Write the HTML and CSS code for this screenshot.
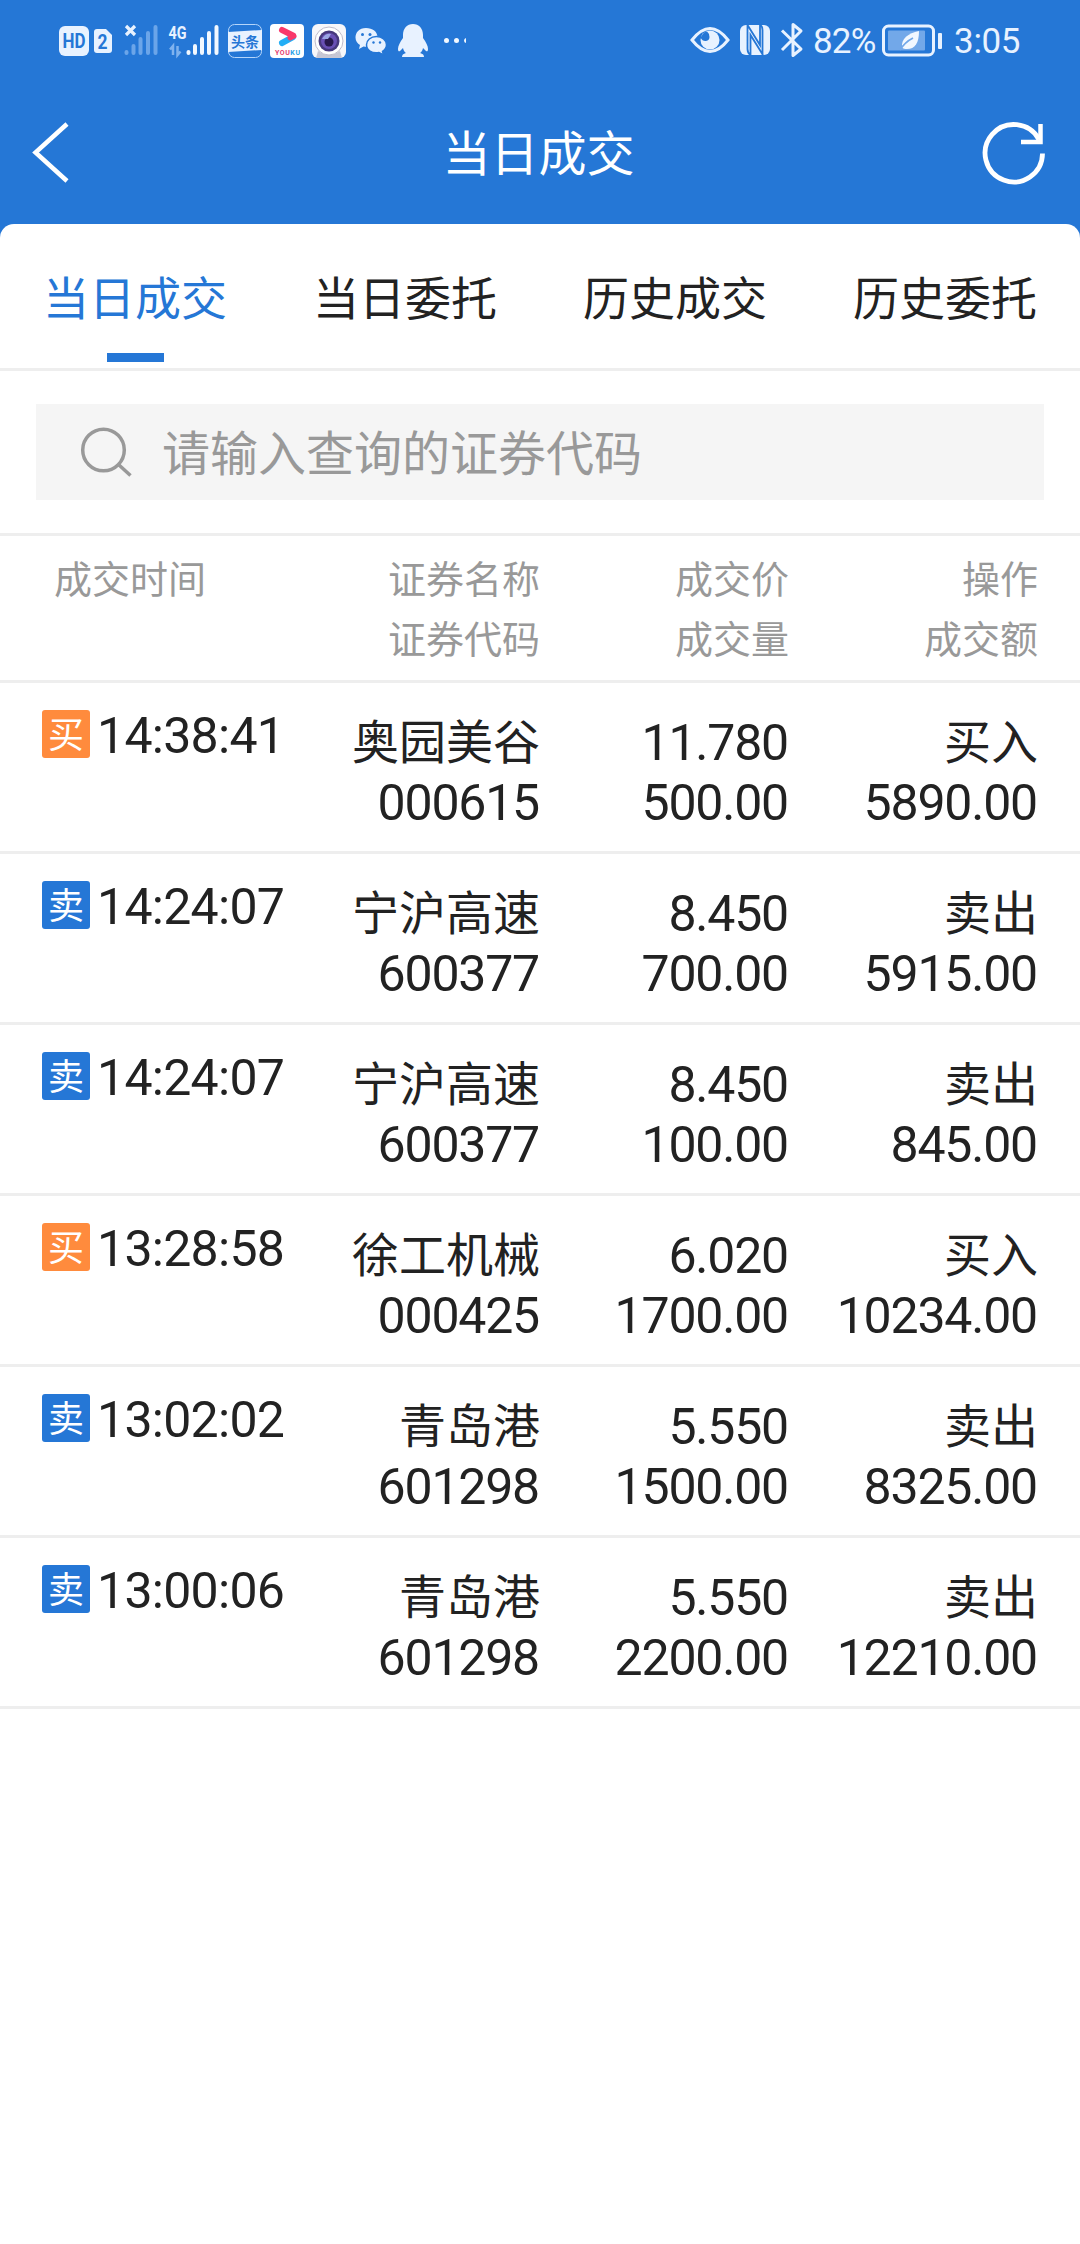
FILE: index.html
```html
<!DOCTYPE html>
<html lang="zh-CN">
<head>
    <meta charset="UTF-8">
    <meta name="viewport" content="width=device-width, initial-scale=1.0">
    <title>当日成交</title>
    <link rel="stylesheet" href="styles.css">
</head>
<body>

<div class="status-bar">
    <div class="status-left">
        <!-- HD + sim 2 -->
        <svg width="53" height="40" viewBox="0 0 53 40">
            <rect x="0" y="6" width="30" height="30" rx="6" fill="#e8f2ff"/>
            <text x="15" y="28" class="icon-text" font-size="20" textLength="23" lengthAdjust="spacingAndGlyphs" text-anchor="middle">HD</text>
            <path d="M38 9h9l6 6v15a3 3 0 0 1-3 3H38a3 3 0 0 1-3-3V12a3 3 0 0 1 3-3z" fill="#e8f2ff"/>
            <text x="43.5" y="28.5" class="icon-text" font-size="21" textLength="10" lengthAdjust="spacingAndGlyphs" text-anchor="middle">2</text>
        </svg>
        <!-- sim 1, no signal -->
        <svg width="40" height="40" viewBox="0 0 40 40">
            <path d="M6 6l9 9M15 6l-9 9" stroke="#e8f2ff" stroke-width="3.2"/>
            <g stroke="#6ba5e9" stroke-width="4" stroke-linecap="round">
                <path d="M6.5 32v1M13.5 26v7M20.5 19v14M28 13v20M35.5 7v26"/>
            </g>
        </svg>
        <!-- sim 2, 4G -->
        <svg width="52" height="40" viewBox="0 0 52 40">
            <text x="0.5" y="18.5" class="icon-text light" font-size="19" textLength="18" lengthAdjust="spacingAndGlyphs">4G</text>
            <path d="M5 35V26l-3 3.5M9.5 26v9l3-3.500" fill="none" stroke="#7fb2ee" stroke-width="2.5"/>
            <g stroke="#f2f8ff" stroke-width="4" stroke-linecap="round">
                <path d="M20.5 32v1M27 26v7M34 19v14M41 13v20M48.5 7v26"/>
            </g>
        </svg>
        <!-- toutiao -->
        <svg width="34" height="40" viewBox="0 0 34 40">
            <rect x="0.5" y="4.500" width="33" height="33" rx="6" fill="#2577d6" stroke="#b5d5fa"/>
            <path d="M0 12l34-2v20L0 32z" fill="#e8f2ff"/>
            <text x="17" y="26.5" class="icon-text" font-size="14" text-anchor="middle">头条</text>
        </svg>
        <!-- youku -->
        <svg width="34" height="40" viewBox="0 0 34 40">
            <rect y="4" width="34" height="34" rx="4" fill="#fff"/>
            <path d="M12 23l11-6" stroke="#22aef5" stroke-width="6" stroke-linecap="round"/>
            <path d="M12 10l11 5.5" stroke="#f9386b" stroke-width="6" stroke-linecap="round"/>
            <path d="M20 18l4-2" stroke="#f9386b" stroke-width="5" stroke-linecap="round"/>
            <text x="5" y="35" font-size="7" font-weight="700" fill="#e54070" textLength="25" class="youku-text">YOU<tspan fill="#27a0e8">KU</tspan></text>
        </svg>
        <!-- camera -->
        <svg width="34" height="40" viewBox="0 0 34 40">
            <rect y="4" width="34" height="34" rx="6" fill="#f7f7fa"/>
            <path d="M6 31q11 7 22 0l2 7H4z" fill="#c6c6d4"/>
            <circle cx="17" cy="21" r="14" fill="#fff" stroke="#c0bcca"/>
            <circle cx="17" cy="21" r="10.5" fill="#47397c"/>
            <circle cx="17" cy="21" r="8" fill="#6950b4"/>
            <circle cx="17" cy="22" r="4.5" fill="#28194d"/>
            <path d="M10 19q3-6 9-5l-3 5z" fill="#9aa5e4"/>
        </svg>
        <!-- wechat -->
        <svg width="34" height="40" viewBox="0 0 34 40">
            <path d="M12 8C5 8 1.5 12.5 1.5 17.5c0 3.5 2 6 4.5 7.5l-1 4 4.500-2.500c8 2 14-3 14-9S18.500 8 12 8z" fill="#e8f2ff"/>
            <path d="M22.5 16.5c-6 0-10 4-10 8.300 0 5 5 9 12.500 7.700l4.500 2.300-1-3.500c2.500-1.500 4-3.800 4-6.500 0-4.500-4.500-8.300-10-8.300z" fill="#e8f2ff" stroke="#2577d6" stroke-width="1.5"/>
            <g fill="#2577d6"><circle cx="8.5" cy="14.5" r="1.5"/><circle cx="16" cy="14.5" r="1.5"/><circle cx="19.5" cy="22.5" r="1.2"/><circle cx="26" cy="22.5" r="1.2"/></g>
        </svg>
        <!-- qq -->
        <svg width="34" height="40" viewBox="0 0 34 40">
            <path d="M17 4c-6 0-10 4.500-10 11v3c-3 4-5 8-5 11 0 2.500 1 2.500 2 2l3-3c.5 2.500 1.500 4 3 5-3 .7-4 2-4 4h22c0-2-1-3.300-4-4 1.500-1 2.500-2.500 3-5l3 3c1 .5 2 .5 2-2 0-3-2-7-5-11v-3c0-6.500-4-11-10-11z" fill="#e8f2ff"/>
        </svg>
        <svg width="30" height="40" viewBox="0 0 30 40" fill="#f2f8ff">
            <circle cx="8.5" cy="20.5" r="2.5"/><circle cx="18.5" cy="20.5" r="2.5"/><path d="M28 18v5q-2-.5-2-2.500t2-2.500z"/>
        </svg>
    </div>
    <div class="status-right">
        <!-- eye comfort -->
        <svg width="42" height="40" viewBox="0 0 42 40">
            <path d="M3 20Q12 8.500 21 8.500T39 20Q30 31.500 21 31.500T3 20z" fill="none" stroke="#e8f2ff" stroke-width="3"/>
            <circle cx="21" cy="20" r="9.5" fill="#e8f2ff"/>
            <path d="M11.500 17.500q2 4 5.500 3.500t3.500-4-2.500-5.500l-3 1z" fill="#2577d6"/>
        </svg>
        <!-- nfc -->
        <svg width="32" height="40" viewBox="0 0 32 40">
            <rect x="1" y="5" width="30" height="30" rx="6" fill="#e8f2ff"/>
            <path d="M8.500 5v24q0 4 3 6M11.500 35V15l12.500 20M8.500 5L21 25V5q2.500 1 2.500 5v25" fill="none" stroke="#2577d6" stroke-width="1.8"/>
        </svg>
        <!-- bluetooth -->
        <svg width="26" height="40" viewBox="0 0 26 40">
            <path d="M3 10.500L22 29l-8 6.500v-31l8 6.500L3 30" fill="none" stroke="#e8f2ff" stroke-width="3" stroke-linejoin="round"/>
        </svg>
        <span class="battery-level">82%</span>
        <!-- battery -->
        <svg width="62" height="40" viewBox="0 0 62 40">
            <rect x="1.5" y="6" width="50" height="29" rx="5" fill="none" stroke="#e8f2ff" stroke-width="3"/>
            <rect x="6" y="10.5" width="37" height="20" rx="1" fill="#72a8e9"/>
            <rect x="56" y="13" width="4" height="16" rx="1" fill="#e8f2ff"/>
            <path d="M37 11c0 12-4 18-12 18-2 0-4-.5-5-1.500-1-9 6-14 17-16.500z" fill="#f2f8ff"/>
            <path d="M18 30q5-8 13-12" fill="none" stroke="#72a8e9" stroke-width="1.8"/>
        </svg>
        <span class="clock">3:05</span>
    </div>
</div>

<div class="header">
    <svg class="back" width="44" height="70" viewBox="0 0 44 70">
        <path d="M39 7L7.500 35.500 39 64" fill="none" stroke="#fff" stroke-width="4.5"/>
    </svg>
    <h1>当日成交</h1>
    <svg class="refresh" width="70" height="70" viewBox="0 0 70 70">
        <path d="M63.500 36.500A28.700 28.700 0 1 1 60 22.500" fill="none" stroke="#fff" stroke-width="4.8"/>
        <path d="M61.500 7v18H42" fill="none" stroke="#fff" stroke-width="4.5"/>
    </svg>
</div>

<div class="sheet">
    <div class="tabs">
        <div class="tab active">当日成交</div>
        <div class="tab">当日委托</div>
        <div class="tab">历史成交</div>
        <div class="tab">历史委托</div>
    </div>

    <div class="search-section">
        <div class="search-box">
            <svg width="54" height="54" viewBox="0 0 54 54" fill="none" stroke="#999" stroke-width="3.5">
                <circle cx="23.500" cy="25" r="20.8"/>
                <path d="M39 40l11.500 10.500"/>
            </svg>
            <span>请输入查询的证券代码</span>
        </div>
    </div>

    <div class="row row-head">
        <div class="col-time">成交时间</div>
        <div class="col"><div>证券名称</div><div>证券代码</div></div>
        <div class="col"><div>成交价</div><div>成交量</div></div>
        <div class="col"><div>操作</div><div>成交额</div></div>
    </div>

    <div class="row">
        <div class="col-time"><span class="badge buy">买</span><span class="time">14:38:41</span></div>
        <div class="col"><div class="name">奥园美谷</div><div class="num">000615</div></div>
        <div class="col"><div class="num">11.780</div><div class="num">500.00</div></div>
        <div class="col"><div class="name">买入</div><div class="num">5890.00</div></div>
    </div>
    <div class="row">
        <div class="col-time"><span class="badge sell">卖</span><span class="time">14:24:07</span></div>
        <div class="col"><div class="name">宁沪高速</div><div class="num">600377</div></div>
        <div class="col"><div class="num">8.450</div><div class="num">700.00</div></div>
        <div class="col"><div class="name">卖出</div><div class="num">5915.00</div></div>
    </div>
    <div class="row">
        <div class="col-time"><span class="badge sell">卖</span><span class="time">14:24:07</span></div>
        <div class="col"><div class="name">宁沪高速</div><div class="num">600377</div></div>
        <div class="col"><div class="num">8.450</div><div class="num">100.00</div></div>
        <div class="col"><div class="name">卖出</div><div class="num">845.00</div></div>
    </div>
    <div class="row">
        <div class="col-time"><span class="badge buy">买</span><span class="time">13:28:58</span></div>
        <div class="col"><div class="name">徐工机械</div><div class="num">000425</div></div>
        <div class="col"><div class="num">6.020</div><div class="num">1700.00</div></div>
        <div class="col"><div class="name">买入</div><div class="num">10234.00</div></div>
    </div>
    <div class="row">
        <div class="col-time"><span class="badge sell">卖</span><span class="time">13:02:02</span></div>
        <div class="col"><div class="name">青岛港</div><div class="num">601298</div></div>
        <div class="col"><div class="num">5.550</div><div class="num">1500.00</div></div>
        <div class="col"><div class="name">卖出</div><div class="num">8325.00</div></div>
    </div>
    <div class="row">
        <div class="col-time"><span class="badge sell">卖</span><span class="time">13:00:06</span></div>
        <div class="col"><div class="name">青岛港</div><div class="num">601298</div></div>
        <div class="col"><div class="num">5.550</div><div class="num">2200.00</div></div>
        <div class="col"><div class="name">卖出</div><div class="num">12210.00</div></div>
    </div>
</div>

</body>
</html>
```
FILE: styles.css
```css
:root {
    --blue: #2577d6;
    --line: #eeeeee;
    --text: #222222;
    --muted: #999999;
}

* {
    margin: 0;
    padding: 0;
    box-sizing: border-box;
}

body {
    min-height: 100vh;
    display: flex;
    flex-direction: column;
    font-family: "Noto Sans CJK SC", sans-serif;
    color: var(--text);
    background-color: var(--blue);
}

svg {
    display: block;
    flex-shrink: 0;
}

/* Status bar */
.status-bar {
    height: 80px;
    padding: 20px 60px 0 59px;
    display: flex;
    justify-content: space-between;
}

.status-left, .status-right {
    height: 40px;
    display: flex;
    gap: 8px;
}

.status-right {
    color: #e8f2ff;
    font-family: Roboto, sans-serif;
    font-size: 35px;
    line-height: 44px;
}

.battery-level {
    width: 61px;
    letter-spacing: -0.8px;
}

.clock {
    width: 66px;
    margin-left: 2px;
    text-align: right;
    letter-spacing: -0.4px;
}

.icon-text {
    font-family: Roboto, "Noto Sans CJK SC", sans-serif;
    font-weight: 700;
    fill: var(--blue);
}

.icon-text.light {
    fill: #e8f2ff;
}

.youku-text {
    font-family: Roboto, sans-serif;
}

/* Title */
.header {
    height: 144px;
    padding: 0 31px 0 28px;
    display: grid;
    grid-template-columns: 1fr auto 1fr;
    align-items: center;
}

.header h1 {
    padding-bottom: 4px;
    font-size: 48px;
    font-weight: 400;
    line-height: 70px;
    color: #fff;
}

.refresh {
    justify-self: end;
}

.sheet {
    flex: 1;
    background-color: #fff;
    border-radius: 14px 14px 0 0;
}

/* Tabs */
.tabs {
    height: 147px;
    display: flex;
    border-bottom: 3px solid var(--line);
}

.tab {
    flex: 1;
    display: flex;
    flex-direction: column;
    align-items: center;
    padding-top: 36px;
    font-size: 46px;
    line-height: 70px;
}

.tab.active {
    color: var(--blue);
}

.tab.active::after {
    content: "";
    width: 57px;
    height: 9px;
    margin-top: 23px;
    background-color: var(--blue);
}

/* Search */
.search-section {
    padding: 33px 36px;
    border-bottom: 3px solid var(--line);
}

.search-box {
    height: 96px;
    padding-left: 44px;
    display: flex;
    align-items: center;
    gap: 28px;
    background-color: #f5f5f5;
    color: var(--muted);
    font-size: 48px;
    line-height: 70px;
}

.search-box span {
    padding-bottom: 4px;
}

/* Trade list */
.row {
    height: 171px;
    padding: 30px 42px 0;
    display: grid;
    grid-template-columns: 246px 252px 249px 249px;
    border-bottom: 3px solid var(--line);
    font-size: 47px;
    line-height: 60px;
}

.row-head {
    height: 147px;
    padding-top: 11px;
    font-size: 38px;
    color: var(--muted);
}

.row-head .col-time {
    padding-left: 12px;
}

.col {
    text-align: right;
}

.col-time {
    display: flex;
    align-items: flex-start;
}

.name {
    margin: -4px 0 4px;
}

.num, .time {
    font-family: Roboto, sans-serif;
    font-size: 50px;
    letter-spacing: -1.2px;
}

.num {
    padding-right: 1px;
}

.time {
    margin-left: 7px;
    margin-top: -3px;
    line-height: 52px;
    letter-spacing: -0.7px;
}

.badge {
    width: 48px;
    height: 48px;
    margin-top: -3px;
    border-radius: 3px;
    color: #fff;
    font-size: 36px;
    line-height: 44px;
    text-align: center;
}

.buy {
    background-color: #ff8b3d;
}

.sell {
    background-color: var(--blue);
}
```
